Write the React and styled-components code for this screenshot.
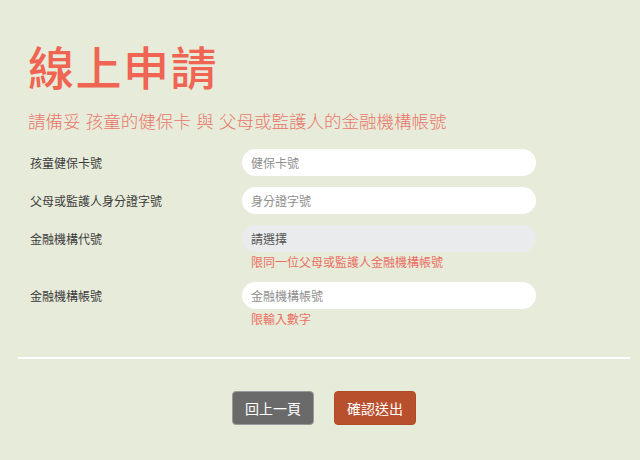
import React from "react";
import styled, { createGlobalStyle } from "styled-components";

const Global = createGlobalStyle`
  html, body { margin: 0; padding: 0; background: #e7ebd9; }
  body { font-family: "Noto Sans CJK TC", "Noto Sans", sans-serif; }
  * { box-sizing: border-box; }
`;

const Page = styled.div`
  width: 640px;
  min-height: 460px;
  padding: 42px 10px 0 18px;
  background: #e7ebd9;
`;

const Header = styled.header`
  padding-left: 10px;
`;

const Title = styled.h1`
  margin: 0;
  font-size: 46px;
  line-height: 46px;
  font-weight: 500;
  color: #ef6452;
  letter-spacing: 1.5px;
`;

const Subtitle = styled.p`
  margin: 21px 0 0;
  font-size: 17.5px;
  line-height: 24px;
  font-weight: 300;
  color: #e9776b;
  word-spacing: 1.5px;
`;

const Form = styled.form`
  margin-top: 16px;
  padding-left: 12px;
  display: flex;
  flex-direction: column;
  gap: 11px;
`;

const Row = styled.div`
  display: grid;
  grid-template-columns: 212px 294px;
  align-items: start;
`;

const Label = styled.label`
  font-size: 12px;
  line-height: 27px;
  color: #3c3c3c;
  font-weight: 400;
`;

const Field = styled.div`
  display: flex;
  flex-direction: column;
`;

const Input = styled.input`
  height: 27px;
  width: 100%;
  border: none;
  outline: none;
  border-radius: 14px;
  padding: 0 9px;
  font-family: inherit;
  font-size: 12px;
  color: #333;
  background: ${(p) => (p.$muted ? "#e9ebed" : "#ffffff")};
  &::placeholder { color: ${(p) => (p.$muted ? "#555" : "#8f8f8f")}; }
`;

const Hint = styled.div`
  margin-top: 1px;
  padding-left: 9px;
  font-size: 12px;
  line-height: 18px;
  color: #ea6f63;
`;

const Divider = styled.hr`
  margin: 29px 0 0;
  border: none;
  height: 2px;
  background: #ffffff;
`;

const Actions = styled.div`
  display: flex;
  justify-content: center;
  gap: 20px;
  margin-top: 32px;
`;

const Button = styled.button`
  width: 82px;
  height: 34px;
  border-radius: 4px;
  border: 1px solid ${(p) => (p.$primary ? "#b04a29" : "#9a9a9a")};
  background: ${(p) => (p.$primary ? "#b8502e" : "#6a6a6a")};
  color: #fff;
  font-family: inherit;
  font-size: 14px;
  line-height: 1;
  cursor: pointer;
`;

const fields = [
  { label: "孩童健保卡號", placeholder: "健保卡號" },
  { label: "父母或監護人身分證字號", placeholder: "身分證字號" },
  { label: "金融機構代號", placeholder: "請選擇", muted: true, hint: "限同一位父母或監護人金融機構帳號" },
  { label: "金融機構帳號", placeholder: "金融機構帳號", hint: "限輸入數字" },
];

export default function App() {
  return (
    <>
      <Global />
      <Page>
        <Header>
          <Title>線上申請</Title>
          <Subtitle>請備妥 孩童的健保卡 與 父母或監護人的金融機構帳號</Subtitle>
        </Header>
        <Form onSubmit={(e) => e.preventDefault()}>
          {fields.map((f) => (
            <Row key={f.label}>
              <Label>{f.label}</Label>
              <Field>
                <Input placeholder={f.placeholder} $muted={f.muted} readOnly={f.muted} />
                {f.hint && <Hint>{f.hint}</Hint>}
              </Field>
            </Row>
          ))}
        </Form>
        <Divider />
        <Actions>
          <Button type="button">回上一頁</Button>
          <Button type="button" $primary>確認送出</Button>
        </Actions>
      </Page>
    </>
  );
}
